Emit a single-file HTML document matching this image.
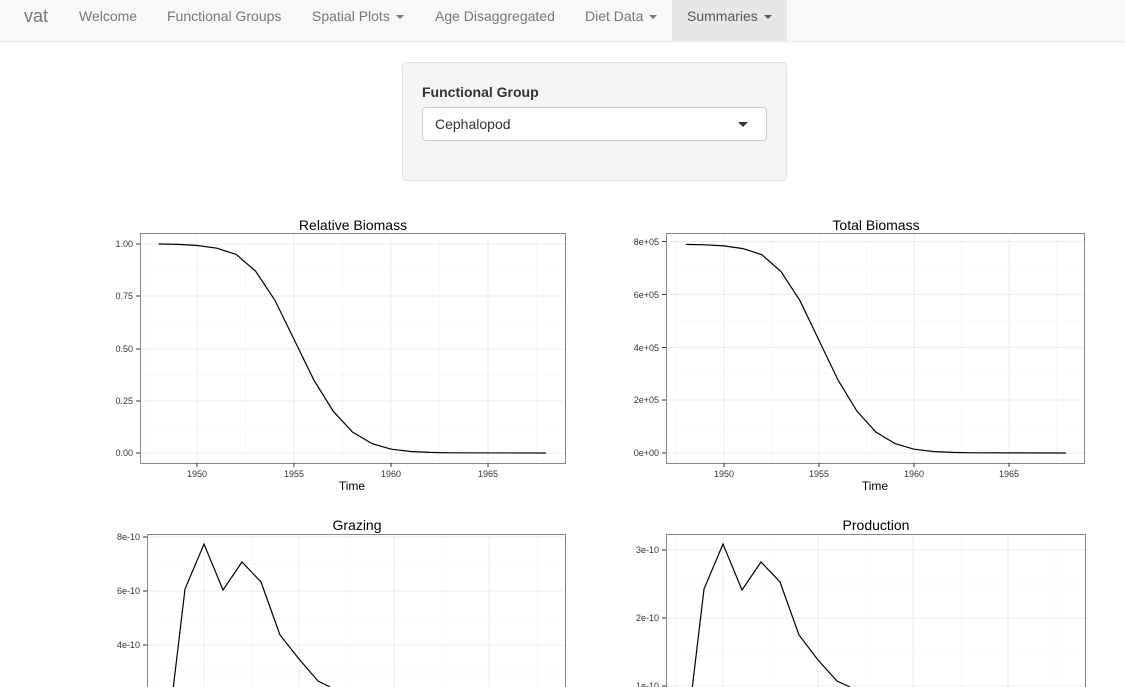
<!DOCTYPE html>
<html><head><meta charset="utf-8"><style>
*{box-sizing:border-box}
body{margin:0;width:1125px;height:687px;overflow:hidden;background:#fff;font-family:"Liberation Sans",Arial,sans-serif;position:relative}
.nav{position:absolute;left:0;top:0;width:1125px;height:42px;background:#f8f8f8;border-bottom:1px solid #e7e7e7}
.nav span{position:absolute;top:0;height:41px;line-height:33px;font-size:14px;color:#777}
.caret{display:inline-block;width:0;height:0;border-left:4px solid transparent;border-right:4px solid transparent;border-top:4px solid #777;vertical-align:middle;margin-left:6px}
.panel{position:absolute;left:402px;top:62px;width:385px;height:119px;background:#f5f5f5;border:1px solid #e3e3e3;border-radius:4px}
.lbl{position:absolute;left:19px;top:21px;font-weight:bold;font-size:14px;color:#333}
.sel{position:absolute;left:19px;top:44px;width:345px;height:34px;background:#fff;border:1px solid #ccc;border-radius:4px;font-size:14px;color:#333;padding-left:12px;line-height:32px}
.sel i{position:absolute;right:18px;top:14px;border-left:5px solid transparent;border-right:5px solid transparent;border-top:5px solid #333}
svg{position:absolute;left:0;top:0}
svg text{font-family:"Liberation Sans",Arial,sans-serif}
</style></head><body>
<div class="nav">
<span style="left:24px;font-size:18px;color:#777;line-height:32px">vat</span>
<span style="left:79px">Welcome</span>
<span style="left:167px">Functional Groups</span>
<span style="left:312px">Spatial Plots<i class="caret"></i></span>
<span style="left:435px">Age Disaggregated</span>
<span style="left:585px">Diet Data<i class="caret"></i></span>
<span style="left:672px;width:115px;background:#e7e7e7;color:#555;padding-left:15px">Summaries<i class="caret" style="border-top-color:#555"></i></span>
</div>
<div class="panel"><div class="lbl">Functional Group</div><div class="sel">Cephalopod<i></i></div></div>
<svg width="1125" height="687" viewBox="0 0 1125 687">
<g stroke="#f3f3f3" stroke-width="0.6">
<path d="M149 233V463M245.5 233V463M342.5 233V463M439.5 233V463M536.5 233V463M140 270H566M140 322.5H566M140 375H566M140 427H566"/>
<path d="M676 233V463M771.5 233V463M866.5 233V463M961.5 233V463M1056.5 233V463M666 268H1085M666 321.5H1085M666 374H1085M666 426.5H1085"/>
<path d="M157 534V687M252 534V687M347 534V687M442 534V687M537 534V687M147 564H565M147 618H565M147 672H565"/>
<path d="M676 534V687M771 534V687M866 534V687M961 534V687M1056 534V687M666 584H1085M666 652H1085"/>
</g>
<g stroke="#ebebeb" stroke-width="1">
<path d="M197 233V463M294 233V463M391 233V463M488 233V463M140 244H566M140 296H566M140 349H566M140 401H566M140 453H566"/>
<path d="M724 233V463M819 233V463M914 233V463M1009 233V463M666 241.5H1085M666 294.5H1085M666 347.5H1085M666 400H1085M666 453H1085"/>
<path d="M204 534V687M299 534V687M394 534V687M489 534V687M147 537H565M147 591H565M147 645H565"/>
<path d="M723 534V687M818 534V687M913 534V687M1008 534V687M666 550H1085M666 618H1085M666 686H1085"/>
</g>
<g fill="none" stroke="#888" stroke-width="1">
<rect x="140.5" y="233.5" width="425" height="230"/>
<rect x="666.5" y="233.5" width="418" height="230"/>
<path d="M147.5 687V534.5H565.5V687"/>
<path d="M666.5 687V534.5H1085.5V687"/>
</g>
<g stroke="#333" stroke-width="1">
<path d="M136 244H140M136 296H140M136 349H140M136 401H140M136 453H140M197 463V467M294 463V467M391 463V467M488 463V467"/>
<path d="M662 241.5H666M662 294.5H666M662 347.5H666M662 400H666M662 453H666M724 463V467M819 463V467M914 463V467M1009 463V467"/>
<path d="M143 537H147M143 591H147M143 645H147M662 550H666M662 618H666M662 686H666"/>
</g>
<g fill="none" stroke="#000" stroke-width="1.2">
<polyline points="158.6,244 178,244.4 197.4,245.5 216.8,248.2 236.2,254.4 255.6,271.2 275,300.4 294.4,340.1 313.8,379.9 333.2,411.2 352.6,432.1 372,443.6 391.4,449.2 410.8,451.5 430.2,452.4 449.6,452.8 546,453"/>
<polyline points="686,244.4 705,244.8 724,245.9 743,248.6 762,254.8 781,271.5 800,300.7 819,340.4 838,380 857,411.3 876,432.1 895,443.6 914,449.2 933,451.5 952,452.4 971,452.8 1066,453"/>
<polyline points="173,690 185,589 204,544 223,590 242,562 261,582 280,635 299,659 318,681 330,687"/>
<polyline points="692,690 704,589 723,544 742,590 761,562 780,582 799,635 818,660 837,681 850,687"/>
</g>
<g font-size="9" fill="#333" text-anchor="end">
<text x="133" y="247">1.00</text><text x="133" y="299">0.75</text><text x="133" y="352">0.50</text><text x="133" y="404">0.25</text><text x="133" y="456">0.00</text>
<text x="659" y="245">8e+05</text><text x="659" y="298">6e+05</text><text x="659" y="351">4e+05</text><text x="659" y="403">2e+05</text><text x="659" y="456">0e+00</text>
<text x="140" y="540">8e-10</text><text x="140" y="594">6e-10</text><text x="140" y="648">4e-10</text>
<text x="659" y="553">3e-10</text><text x="659" y="621">2e-10</text><text x="659" y="689">1e-10</text>
</g>
<g font-size="9" fill="#333" text-anchor="middle">
<text x="197" y="477">1950</text><text x="294" y="477">1955</text><text x="391" y="477">1960</text><text x="488" y="477">1965</text>
<text x="724" y="477">1950</text><text x="819" y="477">1955</text><text x="914" y="477">1960</text><text x="1009" y="477">1965</text>
</g>
<g font-size="14" fill="#000" text-anchor="middle">
<text x="353" y="230">Relative Biomass</text><text x="876" y="230">Total Biomass</text>
<text x="357" y="530">Grazing</text><text x="876" y="530">Production</text>
</g>
<g font-size="12" fill="#000" text-anchor="middle"><text x="352" y="490">Time</text><text x="875" y="490">Time</text></g>
</svg>
</body></html>
